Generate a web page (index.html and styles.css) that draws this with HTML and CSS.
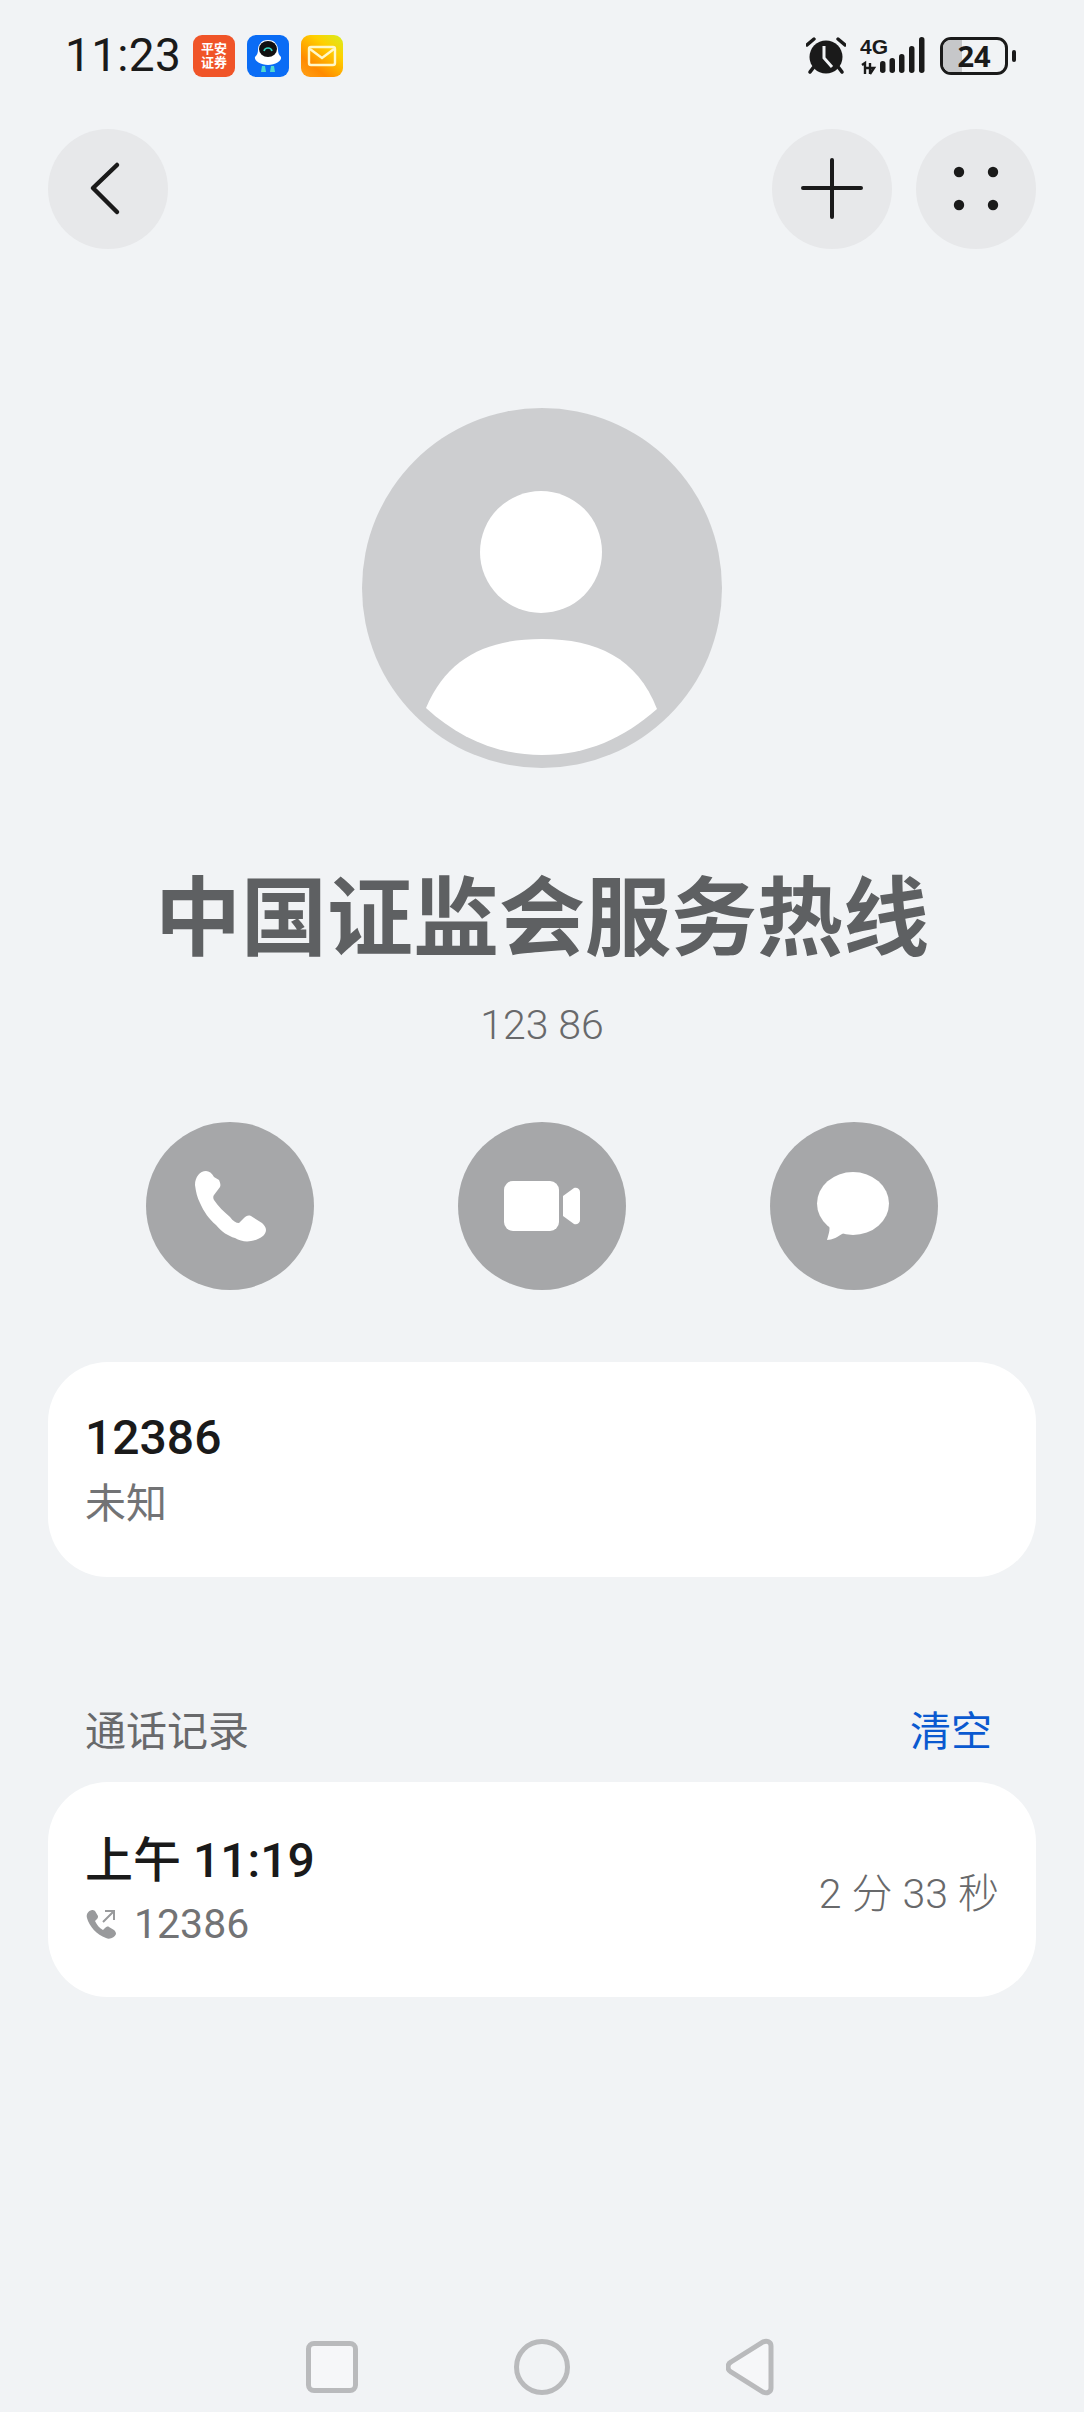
FILE: index.html
```html
<!DOCTYPE html>
<html>
<head>
    <title>联系人详情</title>
    <link rel="stylesheet" href="styles.css">
</head>
<body>
    <div class="status-bar">
        <span class="time">11:23</span>
        <div class="app-icon app-pingan">平安<br>证券</div>
        <svg class="app-icon" viewBox="0 0 42 42">
            <rect width="42" height="42" rx="9" fill="#0a6cf5"/>
            <path d="M21 5c7 0 10 5 10 10 0 3 1 5 3 7 1 4-6 8-13 8s-14-4-13-8c2-2 3-4 3-7 0-5 3-10 10-10z" fill="#fff"/>
            <ellipse cx="21" cy="14" rx="9" ry="8" fill="#111"/>
            <path d="M17 16c1-4 7-4 8 0" fill="none" stroke="#35d6c0" stroke-width="1.6"/>
            <path d="M15 31l-1 6h5l-1-6zM24 31l-1 6h5l-1-6z" fill="#4fd8d0"/>
        </svg>
        <svg class="app-icon" viewBox="0 0 42 42">
            <defs>
                <linearGradient id="mailBg" x1="1" y1="0" x2="0.2" y2="1">
                    <stop offset="0" stop-color="#d6ee20"/>
                    <stop offset="0.35" stop-color="#ffd000"/>
                    <stop offset="0.8" stop-color="#ff8a00"/>
                    <stop offset="1" stop-color="#ff9a10"/>
                </linearGradient>
            </defs>
            <rect width="42" height="42" rx="9" fill="url(#mailBg)"/>
            <rect x="8" y="12" width="26" height="18" rx="2" fill="none" stroke="#fff8c8" stroke-width="2.4"/>
            <path d="M9 14l12 9 12-9" fill="none" stroke="#fff8c8" stroke-width="2.4"/>
        </svg>
        <div class="status-right">
            <svg class="alarm" width="40" height="38" viewBox="0 0 40 38">
                <path d="M1 8l7-6M39 8l-7-6" stroke="#1a1a1a" stroke-width="3.4" stroke-linecap="round"/>
                <path d="M7 31l-3 4M33 31l3 4" stroke="#1a1a1a" stroke-width="3.6" stroke-linecap="round"/>
                <circle cx="20" cy="20" r="16.5" fill="#1a1a1a"/>
                <path d="M18 9v12l8 9" fill="none" stroke="#f1f3f5" stroke-width="3"/>
            </svg>
            <svg class="signal" width="66" height="38" viewBox="0 0 66 38">
                <text class="net-label" x="0" y="17">4G</text>
                <path d="M5 37V26l-3 2M10 37V26M10 37l4-6h-8" fill="none" stroke="#1a1a1a" stroke-width="2.4"/>
                <rect x="20" y="24" width="5.5" height="12" rx="2.7" fill="#1a1a1a"/>
                <rect x="29.5" y="21" width="5.5" height="15" rx="2.7" fill="#1a1a1a"/>
                <rect x="39" y="17" width="5.5" height="19" rx="2.7" fill="#1a1a1a"/>
                <rect x="49" y="9" width="5.5" height="27" rx="2.7" fill="#1a1a1a"/>
                <rect x="59" y="0" width="5.5" height="36" rx="2.7" fill="#1a1a1a"/>
            </svg>
            <div class="battery">
                <div class="battery-body">
                    <div class="battery-level"></div>
                    <span class="battery-text">24</span>
                </div>
                <div class="battery-cap"></div>
            </div>
        </div>
    </div>

    <div class="toolbar">
        <button class="round-btn">
            <svg width="120" height="120" viewBox="0 0 120 120">
                <path d="M69 36L45 59l24 24" fill="none" stroke="#1a1a1a" stroke-width="4.5" stroke-linecap="round" stroke-linejoin="round"/>
            </svg>
        </button>
        <div class="toolbar-right">
            <button class="round-btn">
                <svg width="120" height="120" viewBox="0 0 120 120">
                    <path d="M60 31v57M31 59h58" fill="none" stroke="#1a1a1a" stroke-width="4" stroke-linecap="round"/>
                </svg>
            </button>
            <button class="round-btn">
                <svg width="120" height="120" viewBox="0 0 120 120">
                    <circle cx="43" cy="43" r="5.2" fill="#1a1a1a"/>
                    <circle cx="77" cy="43" r="5.2" fill="#1a1a1a"/>
                    <circle cx="43" cy="76" r="5.2" fill="#1a1a1a"/>
                    <circle cx="77" cy="76" r="5.2" fill="#1a1a1a"/>
                </svg>
            </button>
        </div>
    </div>

    <svg class="avatar" width="360" height="360" viewBox="0 0 360 360">
        <circle cx="180" cy="180" r="180" fill="#cdced0"/>
        <circle cx="179" cy="144" r="61" fill="#fff"/>
        <path d="M64 300C85 250 125 231 180 231C235 231 275 250 295 301C262 330 225 347 180 347C135 347 97 330 64 300Z" fill="#fff"/>
    </svg>

    <h1 class="name">中国证监会服务热线</h1>
    <div class="number">123 86</div>

    <div class="actions">
        <button class="action-btn">
            <svg width="168" height="168" viewBox="0 0 168 168">
                <path d="M60 49C54 49 49 55 49 63C50 70 51 75 54 81C58 90 63 97 70 103C76 110 82 114 89 116C94 119 100 120 105 119C112 118 120 114 120 108C120 105 118 103 116 101L105 94C102 93 100 94 98 96L93 101C90 101 87 99 84 95C78 90 72 84 68 78C67 76 67 74 68 73L74 65C75 63 74 60 73 58L68 55C66 51 63 49 60 49Z" fill="#fff"/>
            </svg>
        </button>
        <button class="action-btn">
            <svg width="168" height="168" viewBox="0 0 168 168">
                <rect x="46" y="59" width="55" height="50" rx="9" fill="#fff"/>
                <path d="M105 74L116 66C119 65 122 67 122 70V98C122 101 119 103 116 102L105 94Z" fill="#fff"/>
            </svg>
        </button>
        <button class="action-btn">
            <svg width="168" height="168" viewBox="0 0 168 168">
                <ellipse cx="83" cy="81.5" rx="36" ry="31.5" fill="#fff"/>
                <path d="M58 100C61 106 59 111 57 118C62 118 68 115 75 110Z" fill="#fff"/>
            </svg>
        </button>
    </div>

    <div class="card card-number">
        <div class="card-title">12386</div>
        <div class="card-sub">未知</div>
    </div>

    <div class="section-head">
        <span class="section-title">通话记录</span>
        <span class="section-clear">清空</span>
    </div>

    <div class="card card-log">
        <div class="log-left">
            <div class="card-title">上午 11:19</div>
            <div class="card-sub log-sub">
                <svg width="32" height="32" viewBox="0 0 32 32">
                    <path d="M7 2C3 3 1 6 2 10C4 18 12 27 21 30C25 32 30 29 31 26C31 24 30 23 29 22L24 19C23 18 21 19 20 20L18 22C14 20 12 17 10 13L12 11C13 10 13 9 13 8L10 3C9 2 8 2 7 2Z" fill="#999a9c"/>
                    <path d="M18 14L29 3M20 3h9v9" fill="none" stroke="#999a9c" stroke-width="2"/>
                </svg>
                <span>12386</span>
            </div>
        </div>
        <div class="log-duration">2 分 33 秒</div>
    </div>

    <div class="nav-bar">
        <div class="nav-square"></div>
        <div class="nav-circle"></div>
        <svg width="48" height="58" viewBox="0 0 48 58">
            <path d="M5 24L37 4C41 2 45 4 45 8V50C45 54 41 56 37 54L5 34C1 32 1 26 5 24Z" fill="#f6f7f9" stroke="#b9babc" stroke-width="5"/>
        </svg>
    </div>
</body>
</html>
```

FILE: styles.css
```css
html, body {
    margin: 0;
    padding: 0;
}

body {
    width: 1084px;
    height: 2412px;
    overflow: hidden;
    background-color: #f1f3f5;
    font-family: Roboto, "Noto Sans CJK SC", sans-serif;
    color: #1a1a1a;
}

button {
    border: none;
    padding: 0;
    display: block;
}

svg {
    display: block;
}

.status-bar {
    display: flex;
    align-items: center;
    height: 41px;
    padding: 35px 0 0 65px;
}

.time {
    font-size: 46px;
    line-height: 41px;
    width: 128px;
    letter-spacing: 0.3px;
}

.app-icon {
    width: 42px;
    height: 42px;
    margin-right: 12px;
    flex-shrink: 0;
}

.app-pingan {
    background-color: #f05428;
    border-radius: 9px;
    color: #fff;
    font-size: 13px;
    font-weight: 700;
    line-height: 14px;
    text-align: center;
    box-sizing: border-box;
    padding-top: 7px;
}

.status-right {
    display: flex;
    align-items: flex-start;
    margin-left: auto;
    padding-right: 68px;
}

.alarm {
    margin-right: 14px;
}

.signal {
    margin-right: 14px;
}

.net-label {
    font-family: "Liberation Sans", sans-serif;
    font-size: 21px;
    font-weight: 700;
    fill: #1a1a1a;
}

.battery {
    display: flex;
    align-items: center;
}

.battery-body {
    position: relative;
    width: 68px;
    height: 38px;
    box-sizing: border-box;
    border: 3px solid #1a1a1a;
    border-radius: 11px;
    overflow: hidden;
    text-align: center;
}

.battery-level {
    position: absolute;
    left: 0;
    top: 0;
    bottom: 0;
    width: 19px;
    background-color: #c6c7c9;
}

.battery-text {
    position: relative;
    font-size: 29px;
    font-weight: 700;
    line-height: 32px;
    font-family: "Open Sans", sans-serif;
}

.battery-cap {
    width: 4px;
    height: 12px;
    margin-left: 4px;
    background-color: #1a1a1a;
    border-radius: 2px;
}

.toolbar {
    display: flex;
    justify-content: space-between;
    padding: 0 48px;
    margin-top: 53px;
}

.toolbar-right {
    display: flex;
    gap: 24px;
}

.round-btn {
    width: 120px;
    height: 120px;
    border-radius: 50%;
    background-color: #e7e8ea;
}

.avatar {
    margin: 159px auto 0 362px;
}

.name {
    margin: 94px 0 0;
    font-size: 86px;
    line-height: 100px;
    font-weight: 700;
    text-align: center;
    color: #5e6062;
    font-family: "Noto Sans CJK SC", sans-serif;
}

.number {
    margin-top: 38px;
    font-size: 41px;
    line-height: 50px;
    font-weight: 300;
    text-align: center;
    color: #68696b;
}

.actions {
    display: flex;
    justify-content: center;
    gap: 144px;
    margin-top: 72px;
}

.action-btn {
    width: 168px;
    height: 168px;
    border-radius: 50%;
    background-color: #a6a7a9;
}

.card {
    margin: 0 48px;
    background-color: #fff;
    border-radius: 60px;
    height: 215px;
    box-sizing: border-box;
    padding: 46px 37px 0;
}

.card-number {
    margin-top: 72px;
}

.card-title {
    font-size: 48px;
    line-height: 60px;
    font-weight: 500;
    color: #1a1a1a;
}

.card-sub {
    margin-top: 11px;
    font-size: 41px;
    line-height: 50px;
    color: #727375;
}

.section-head {
    display: flex;
    justify-content: space-between;
    margin-top: 130px;
    padding: 0 92px 0 85px;
    line-height: 50px;
    font-size: 41px;
}

.section-title {
    color: #68696b;
}

.section-clear {
    color: #0a59d0;
}

.card-log {
    margin-top: 25px;
    display: flex;
    justify-content: space-between;
    align-items: center;
    padding: 0 37px;
}

.log-sub {
    display: flex;
    align-items: center;
    gap: 17px;
    margin-top: 8px;
}

.log-duration {
    font-size: 41px;
    font-weight: 300;
    color: #68696b;
}

.nav-bar {
    display: flex;
    align-items: center;
    gap: 156px;
    margin-top: 341px;
    padding-left: 306px;
}

.nav-square {
    width: 52px;
    height: 52px;
    box-sizing: border-box;
    border: 5px solid #b9babc;
    border-radius: 8px;
    background-color: #f6f7f9;
}

.nav-circle {
    width: 56px;
    height: 56px;
    box-sizing: border-box;
    border: 5px solid #b9babc;
    border-radius: 50%;
}
```
